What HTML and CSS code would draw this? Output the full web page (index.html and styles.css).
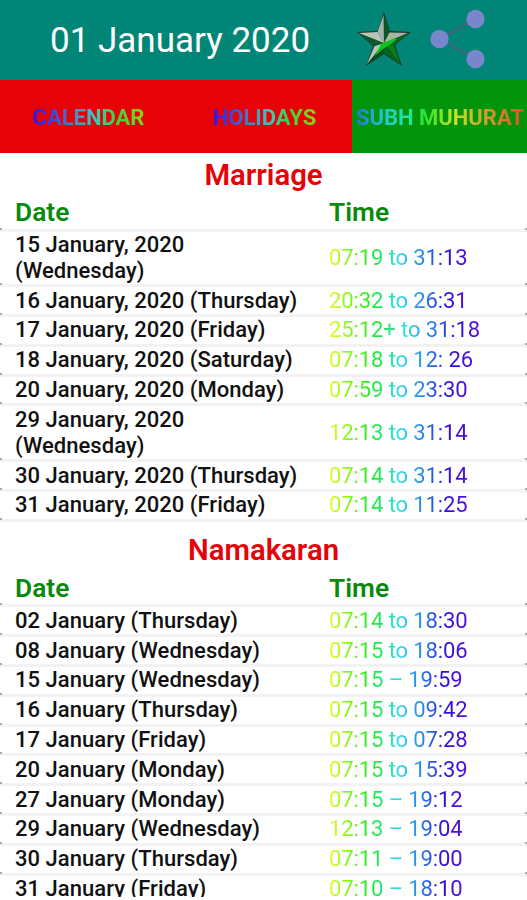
FILE: index.html
```html
<!doctype html>
<html>
<head>
<meta charset="UTF-8">
<title>Subh Muhurat</title>
<link rel="stylesheet" href="styles.css">
</head>

<body>
<div id="app">
    <div class="header">
        <h1>01 January 2020</h1>
        <svg class="star" width="56" height="58" viewBox="0 0 56 58">
            <polygon points="28,2 34,21 55,22 39,35 46,56 28,44 10,56 17,36 1,22 21.500,21" fill="#1c3a2a"/>
            <polygon points="27.500,5 28,33 21.500,22" fill="#a3b5a8"/>
            <polygon points="28.500,5 33.500,22 28,33" fill="#0b5a25"/>
            <polygon points="33.500,22.500 52,23 28,33" fill="#a7b6a9"/>
            <polygon points="52,24 37.500,35 28,33" fill="#0c6a22"/>
            <polygon points="37.500,35 28,33 44.500,54" fill="#087d1c"/>
            <polygon points="28,33 44.500,54 28,43" fill="#07651c"/>
            <polygon points="28,33 28,43 12,54" fill="#06521b"/>
            <polygon points="28,33 11,54 18.500,36" fill="#b9c5b9"/>
            <polygon points="28,33 18.500,36 3,23" fill="#0d5a28"/>
            <polygon points="28,33 3,23 21.500,22" fill="#bac5b9"/>
            <polygon points="19,46 25,34 38,28.500 41,29 35,34 27,39" fill="#09c51d"/>
        </svg>
        <svg class="share" width="56" height="60" viewBox="0 0 56 60">
            <path d="M10 30L46 10M10 30L46 50" stroke="#40677d" stroke-width="2.500"/>
            <circle cx="9.500" cy="30" r="9.200" fill="#7986cb"/>
            <circle cx="45.500" cy="10" r="9.200" fill="#7986cb"/>
            <circle cx="45.500" cy="50" r="9.200" fill="#7986cb"/>
        </svg>
    </div>
    <ul class="tabs">
        <li><span>CALENDAR</span></li>
        <li><span>HOLIDAYS</span></li>
        <li class="current"><span>SUBH MUHURAT</span></li>
    </ul>
    <div class="content">
        <h2>Marriage</h2>
        <ul class="list">
            <li class="title"><b>Date</b><b>Time</b></li>
            <li class="double"><b>15 January, 2020 (Wednesday)</b><span>07:19 to 31:13</span></li>
            <li><b>16 January, 2020 (Thursday)</b><span>20:32 to 26:31</span></li>
            <li><b>17 January, 2020 (Friday)</b><span>25:12+ to 31:18</span></li>
            <li><b>18 January, 2020 (Saturday)</b><span>07:18 to 12: 26</span></li>
            <li><b>20 January, 2020 (Monday)</b><span>07:59 to 23:30</span></li>
            <li class="double"><b>29 January, 2020 (Wednesday)</b><span>12:13 to 31:14</span></li>
            <li><b>30 January, 2020 (Thursday)</b><span>07:14 to 31:14</span></li>
            <li><b>31 January, 2020 (Friday)</b><span>07:14 to 11:25</span></li>
        </ul>
        <h2 class="next">Namakaran</h2>
        <ul class="list">
            <li class="title"><b>Date</b><b>Time</b></li>
            <li><b>02 January (Thursday)</b><span>07:14 to 18:30</span></li>
            <li><b>08 January (Wednesday)</b><span>07:15 to 18:06</span></li>
            <li><b>15 January (Wednesday)</b><span>07:15 – 19:59</span></li>
            <li><b>16 January (Thursday)</b><span>07:15 to 09:42</span></li>
            <li><b>17 January (Friday)</b><span>07:15 to 07:28</span></li>
            <li><b>20 January (Monday)</b><span>07:15 to 15:39</span></li>
            <li><b>27 January (Monday)</b><span>07:15 – 19:12</span></li>
            <li><b>29 January (Wednesday)</b><span>12:13 – 19:04</span></li>
            <li><b>30 January (Thursday)</b><span>07:11 – 19:00</span></li>
            <li><b>31 January (Friday)</b><span>07:10 – 18:10</span></li>
        </ul>
    </div>
</div>
</body>
</html>
```
FILE: styles.css
```css
body,div,ul,li,h1,h2{margin:0;padding:0;}
ul{list-style-type:none;}
body{background:#fff;font:22px/26px Roboto,"Liberation Sans",sans-serif;overflow:hidden;}
#app{width:527px;height:897px;overflow:hidden;}
.header{display:flex;box-sizing:border-box;height:80px;padding-left:50px;background:#008577;}
.header h1{width:306px;color:#fff;font-size:35px;line-height:82px;font-weight:400;white-space:nowrap;}
.header .star{margin-top:10px;}
.header .share{margin:9px 0 0 18px;}
.tabs{display:flex;height:73px;background:#e60307;}
.tabs li{display:flex;width:176px;box-sizing:border-box;padding:2px 0 0 1px;align-items:center;justify-content:center;font-size:22px;font-weight:700;white-space:nowrap;}
.tabs .current{width:175px;background:#03940b;}
.tabs span{color:transparent;background:linear-gradient(90deg,#2b12ee,#4f86c8 38%,#39c9c4 55%,#40d13f 75%,#8fd414);-webkit-background-clip:text;background-clip:text;}
.tabs .current span{background-image:linear-gradient(90deg,#2b70e0,#1cc8d8 16%,#22e6a0 31%,#2be62b 42%,#c4e62b 58%,#c9a82b 75%,#e0502b);}
.content h2{padding-top:8px;height:38px;box-sizing:border-box;color:#e60307;font-size:29.300px;line-height:29px;font-weight:600;text-align:center;}
.content h2.next{padding-top:14px;height:45px;}
.list li{position:relative;display:grid;grid-template-columns:314px 1fr;align-items:center;box-sizing:border-box;height:29.800px;padding:0 0 0 15px;border-bottom:3px solid #f2f2f2;}
.list .double{height:55.800px;}
.list .title{height:40.500px;padding-top:4px;font-size:26.300px;}
.list b{font-weight:500;color:#111;padding-right:28px;letter-spacing:.04px;}
.list .title b{color:#0a8a0d;font-weight:600;}
.list span{justify-self:start;color:transparent;letter-spacing:-.1px;background:linear-gradient(90deg,#e2ff20,#1cec1c 30%,#2ce0e8 50%,#2878e8 70%,#2f10d8 85%,#5410e0);-webkit-background-clip:text;background-clip:text;}
/* dark corners at both ends of the row line */
.list li:before,.list li:after{content:"";position:absolute;bottom:-1px;left:0;width:2px;height:2px;background:#aaa;}
.list li:after{left:auto;right:0;}
```
